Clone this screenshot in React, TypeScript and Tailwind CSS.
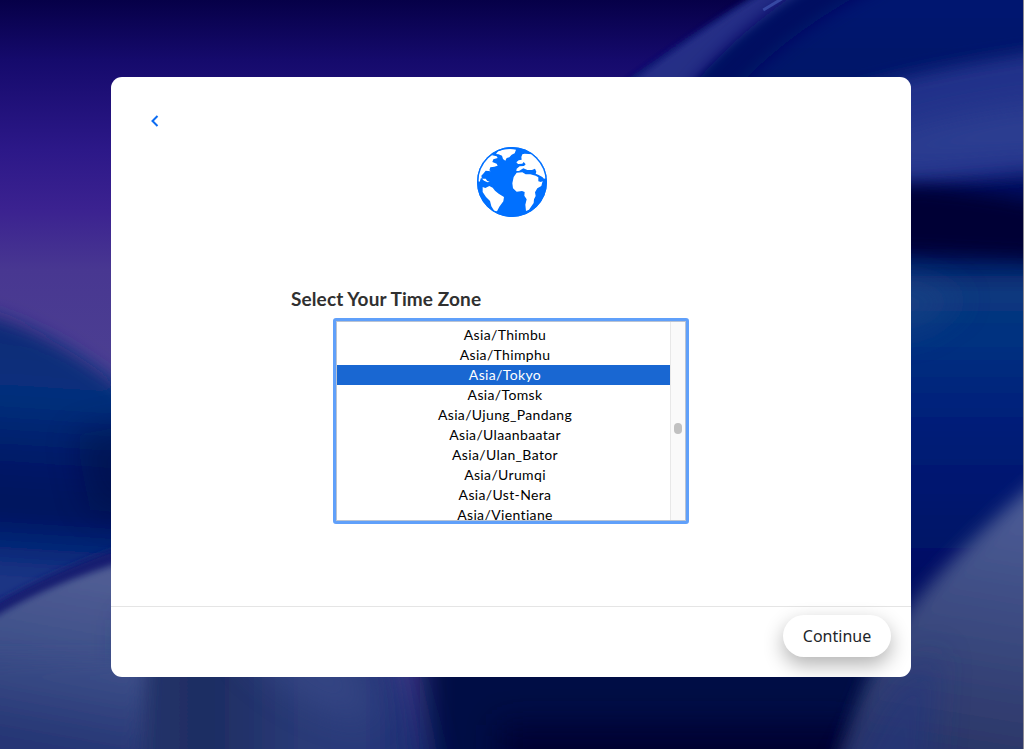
const zones = [
  'Asia/Thimbu',
  'Asia/Thimphu',
  'Asia/Tokyo',
  'Asia/Tomsk',
  'Asia/Ujung_Pandang',
  'Asia/Ulaanbaatar',
  'Asia/Ulan_Bator',
  'Asia/Urumqi',
  'Asia/Ust-Nera',
  'Asia/Vientiane',
]

function Wallpaper() {
  return (
    <svg className="absolute inset-0 w-full h-full" viewBox="0 0 1024 749" preserveAspectRatio="none" aria-hidden="true">
      <defs>
        <linearGradient id="sky" x1="0" y1="0" x2="0" y2="749" gradientUnits="userSpaceOnUse">
          <stop offset="0" stopColor="#060048" />
          <stop offset="0.08" stopColor="#150a6c" />
          <stop offset="0.2" stopColor="#2c1888" />
          <stop offset="0.28" stopColor="#3b2290" />
          <stop offset="0.36" stopColor="#483791" />
          <stop offset="0.5" stopColor="#4c4092" />
        </linearGradient>
        <linearGradient id="leftSea" x1="20" y1="310" x2="0" y2="620" gradientUnits="userSpaceOnUse">
          <stop offset="0" stopColor="#172a76" />
          <stop offset="0.28" stopColor="#04307c" />
          <stop offset="0.48" stopColor="#001a68" />
          <stop offset="0.64" stopColor="#00105c" />
          <stop offset="0.74" stopColor="#002474" />
          <stop offset="0.86" stopColor="#1c3585" />
          <stop offset="1" stopColor="#1c3183" />
        </linearGradient>
        <linearGradient id="leftDune" x1="90" y1="580" x2="60" y2="749" gradientUnits="userSpaceOnUse">
          <stop offset="0" stopColor="#4f5c93" />
          <stop offset="0.5" stopColor="#3c4e88" />
          <stop offset="1" stopColor="#253574" />
        </linearGradient>
        <linearGradient id="rightSea" x1="0" y1="0" x2="0" y2="749" gradientUnits="userSpaceOnUse">
          <stop offset="0" stopColor="#001270" />
          <stop offset="0.33" stopColor="#001058" />
          <stop offset="0.39" stopColor="#0a387e" />
          <stop offset="0.46" stopColor="#003080" />
          <stop offset="0.55" stopColor="#00207a" />
          <stop offset="0.7" stopColor="#00126a" />
          <stop offset="0.88" stopColor="#000e58" />
          <stop offset="1" stopColor="#000238" />
        </linearGradient>
        <linearGradient id="rightDune" x1="1000" y1="500" x2="960" y2="749" gradientUnits="userSpaceOnUse">
          <stop offset="0" stopColor="#4c5c96" />
          <stop offset="0.5" stopColor="#3b4a80" />
          <stop offset="1" stopColor="#2b3668" />
        </linearGradient>
        <linearGradient id="bottomFold" x1="140" y1="0" x2="440" y2="0" gradientUnits="userSpaceOnUse">
          <stop offset="0" stopColor="#26356c" />
          <stop offset="0.22" stopColor="#1d2c61" />
          <stop offset="0.55" stopColor="#2a3b78" />
          <stop offset="0.78" stopColor="#2b3a7c" />
          <stop offset="1" stopColor="#082066" />
        </linearGradient>
        <filter id="soft3" filterUnits="userSpaceOnUse" x="-150" y="-150" width="1324" height="1049"><feGaussianBlur stdDeviation="3.5" /></filter>
        <filter id="soft8" filterUnits="userSpaceOnUse" x="-150" y="-150" width="1324" height="1049"><feGaussianBlur stdDeviation="9" /></filter>
        <filter id="soft14" filterUnits="userSpaceOnUse" x="-150" y="-150" width="1324" height="1049"><feGaussianBlur stdDeviation="16" /></filter>
      </defs>
      <rect width="1024" height="749" fill="url(#sky)" />

      {/* left side */}
      <path d="M-120 286L0 318Q60 338 125 390L300 480V800H-120Z" fill="url(#leftSea)" filter="url(#soft8)" />
      <path d="M75 435L240 405V525L90 510Z" fill="#00083e" opacity="0.45" filter="url(#soft14)" />
      <path d="M-30 619Q50 568 140 541V562Q60 583 -30 636Z" fill="#171d70" filter="url(#soft3)" />
      <path d="M-40 634L0 614Q50 584 130 560L260 580V800H-120V660Z" fill="url(#leftDune)" filter="url(#soft3)" />

      {/* right side */}
      <path d="M784 -20Q700 29 602 98L500 300V880H1140V-80H860Z" fill="url(#rightSea)" filter="url(#soft3)" />
      <path d="M788 -22Q704 26 614 94H685Q735 35 836 -22Z" fill="#2b328a" opacity="0.9" filter="url(#soft3)" />
      <path d="M880 -35Q765 22 700 105" stroke="#000c60" strokeWidth="34" fill="none" filter="url(#soft8)" />
      <path d="M784 -2Q774 4 764 10" stroke="#4a62bc" strokeWidth="3" fill="none" opacity="0.6" />
      <path d="M850 92Q950 62 1120 42V165L850 190Z" fill="#24318a" filter="url(#soft8)" />
      <path d="M870 145Q960 108 1120 100V150L870 168Z" fill="#304494" opacity="0.7" filter="url(#soft14)" />
      <path d="M860 188Q960 180 1120 222V262Q960 254 860 250Z" fill="#000036" filter="url(#soft8)" />
      <path d="M850 275Q930 275 965 300L920 330H850Z" fill="#1e4384" opacity="0.7" filter="url(#soft14)" />

      {/* bottom */}
      <path d="M420 640H880V880H420Z" fill="#000744" filter="url(#soft14)" />
      <path d="M500 725H860V880H500Z" fill="#000132" filter="url(#soft14)" />
      <path d="M130 620H382Q415 690 440 800L450 880H130Z" fill="url(#bottomFold)" filter="url(#soft14)" />
      <path d="M240 650H350L375 720Q310 720 240 650Z" fill="#3b4b89" opacity="0.6" filter="url(#soft14)" />
      <path d="M-120 660H146Q138 710 144 880H-120Z" fill="url(#leftDune)" filter="url(#soft8)" />
      <path d="M1140 400Q975 525 905 615Q850 690 810 880H1140Z" fill="url(#rightDune)" filter="url(#soft8)" />
      <path d="M890 690L940 650L930 800H830Z" fill="#22357e" opacity="0.55" filter="url(#soft14)" />
    </svg>
  )
}

function Globe() {
  return (
    <svg className="w-[70px] h-[70px] ml-0.5" viewBox="45 30 210 210" aria-hidden="true">
      <circle cx="150" cy="135" r="105" fill="#0070ff" />
      <g fill="#fff">
        <path d="M108 43Q134 33 162 38L158 49L149 53L142 61L134 63L130 71L123 66L120 56L110 52L102 51Z" />
        <path d="M93 48L90 55L104 58L107 63L94 67L91 75L104 80L107 86L97 89L85 91L82 100L86 103L71 101L65 109L58 116L60 125L71 125L76 132L83 134L77 136L66 131L57 122L53 134L49 133Q46 82 93 48Z" />
        <path d="M62 150L70 153L82 147L92 152L99 161L110 170L126 180L124 193L112 209L105 223L97 222L88 208L84 192L72 180L62 165Z" />
        <path d="M188 50L181 52L178 60L179 68L170 70L163 76L168 81L181 80L185 75L191 82L186 87L173 88L164 95L163 102L171 102L184 94L196 99L210 99L219 95L223 104L221 110L230 114L241 120L246 125L253 124Q248 75 211 52Z" />
        <path d="M164 107L181 106L191 112L205 112L221 116L229 121L229 133L237 135L242 132L238 147L226 154L219 166L221 177L216 187L215 198L201 218L192 222L190 203L194 187L187 176L188 165L180 162L164 164L153 154L151 139L155 120Z" />
      </g>
      <circle cx="150" cy="135" r="103" fill="none" stroke="#0070ff" strokeWidth="4" />
    </svg>
  )
}

export default function App() {
  return (
    <div className="relative w-screen h-screen overflow-hidden border-r border-[#8d8d94] flex justify-center items-start pt-[77px]">
      <Wallpaper />
      <main className="relative w-[800px] h-[600px] -ml-px rounded-[11px] bg-white flex flex-col overflow-hidden">
        <div className="flex-1 flex flex-col items-center">
          <div className="w-full h-[70px] pl-[39px] pt-[38px]">
            <button aria-label="Back" className="block">
              <svg className="w-[9px] h-3" viewBox="0 0 9 12" fill="none" stroke="#0c6cf2" strokeWidth="2">
                <path d="M7.5 1L2.5 6L7.5 11" />
              </svg>
            </button>
          </div>
          <Globe />
          <div className="w-[440px] mt-[68px]">
            <h1 className="font-['Lato'] font-bold text-[19px] leading-7 tracking-[0.12px] text-[#303030] whitespace-nowrap">Select Your Time Zone</h1>
          </div>
          <div className="w-[356px] h-[206px] mt-[5px] rounded-[3px] border-3 border-[#60a0fa] bg-white flex">
            <div className="flex-1 flex border border-[#b9c3d3] overflow-hidden">
              <ul className="flex-1 pt-[3px] text-center font-['Lato'] text-[14px] leading-5 tracking-[0.35px] text-black">
                {zones.map(zone => (
                  <li key={zone} className={zone === 'Asia/Tokyo' ? 'h-5 pl-[3px] bg-[#1967d2] text-white' : 'h-5 pl-[3px]'}>{zone}</li>
                ))}
              </ul>
              <div className="w-[15px] border-l border-[#e8e8e8] bg-[#fafafa] flex justify-center pt-[101px]">
                <div className="w-2 h-[11px] rounded-full bg-[#c1c1c1]" />
              </div>
            </div>
          </div>
        </div>
        <footer className="h-[71px] border-t border-[#e5e5e5] flex justify-end items-start px-5 pt-2">
          <button className="w-[108px] h-[42px] rounded-full bg-white text-[#212529] font-['Noto_Sans'] text-base shadow-[0_8px_20px_rgba(0,0,0,0.3)]">Continue</button>
        </footer>
      </main>
    </div>
  )
}
